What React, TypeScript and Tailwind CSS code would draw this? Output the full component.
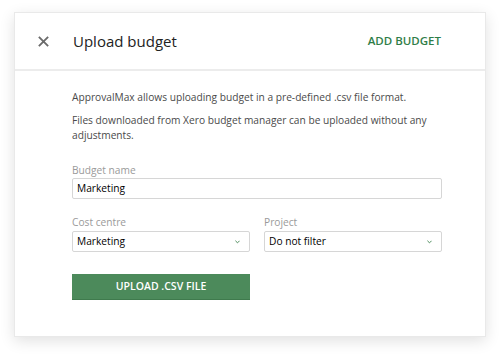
import React from "react";

export default function App() {
  return (
    <div className="w-[500px] h-[354px] bg-white pt-[12px] px-[14px] font-['Open_Sans',sans-serif]">
      <div className="w-[472px] h-[325px] bg-white border border-[#e9e9e9] shadow-[0_4px_14px_rgba(0,0,0,0.12)] flex flex-col">
        {/* Header */}
        <div className="h-[58px] border-b-2 border-[#ececec] flex items-center pl-[22px] pr-[44px]">
          <svg width="13" height="13" viewBox="0 0 14 14" className="mr-[23px]">
            <path d="M2 2 L12 12 M12 2 L2 12" stroke="#6b6b6b" strokeWidth="2" />
          </svg>
          <span className="text-[15px] text-[#222] flex-1">Upload budget</span>
          <span className="text-[11.5px] font-semibold text-[#2f7d48]">ADD BUDGET</span>
        </div>

        {/* Body */}
        <div className="pl-[57px] pr-[43px] pt-[19px] text-[10.2px] text-[#4a4a4a]">
          <p className="leading-[15px]">ApprovalMax allows uploading budget in a pre-defined .csv file format.</p>
          <p className="leading-[15px] mt-[8px]">
            Files downloaded from Xero budget manager can be uploaded without any adjustments.
          </p>

          <div className="mt-[20px]">
            <div className="text-[#9a9a9a] leading-[14px]">Budget name</div>
            <div className="mt-[1px] h-[21px] border border-[#d6d6d6] rounded-[2px] flex items-center px-[4px] text-black">
              Marketing
            </div>
          </div>

          <div className="mt-[16px] flex gap-[14px]">
            <div className="w-[178px]">
              <div className="text-[#9a9a9a] leading-[14px]">Cost centre</div>
              <div className="mt-[2px] h-[21px] border border-[#d6d6d6] rounded-[2px] flex items-center justify-between pl-[4px] pr-[9px] text-black">
                <span>Marketing</span>
                <svg width="5" height="4" viewBox="0 0 6 4">
                  <path d="M0.5 0.5 L3 3 L5.5 0.5" stroke="#4d8b5c" strokeWidth="1.2" fill="none" />
                </svg>
              </div>
            </div>
            <div className="w-[178px]">
              <div className="text-[#9a9a9a] leading-[14px]">Project</div>
              <div className="mt-[2px] h-[21px] border border-[#d6d6d6] rounded-[2px] flex items-center justify-between pl-[4px] pr-[9px] text-black">
                <span>Do not filter</span>
                <svg width="5" height="4" viewBox="0 0 6 4">
                  <path d="M0.5 0.5 L3 3 L5.5 0.5" stroke="#4d8b5c" strokeWidth="1.2" fill="none" />
                </svg>
              </div>
            </div>
          </div>

          <button className="mt-[22px] w-[178px] h-[26px] bg-[#4c8a5b] text-white text-[10.5px] font-semibold flex items-center justify-center border-b border-[#3f7a4d]">
            UPLOAD .CSV FILE
          </button>
        </div>
      </div>
    </div>
  );
}
